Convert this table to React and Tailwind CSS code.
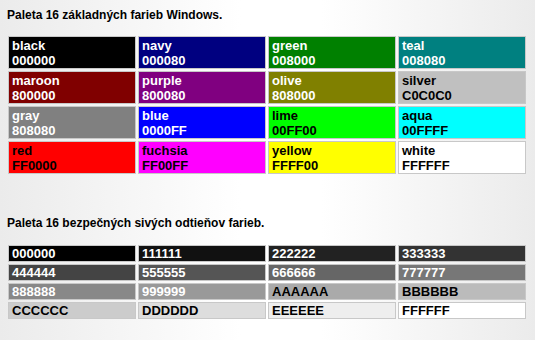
const basic = [
  ['black', '000000', 'text-white'],
  ['navy', '000080', 'text-white'],
  ['green', '008000', 'text-white'],
  ['teal', '008080', 'text-white'],
  ['maroon', '800000', 'text-white'],
  ['purple', '800080', 'text-white'],
  ['olive', '808000', 'text-white'],
  ['silver', 'C0C0C0', 'text-black'],
  ['gray', '808080', 'text-white'],
  ['blue', '0000FF', 'text-white'],
  ['lime', '00FF00', 'text-black'],
  ['aqua', '00FFFF', 'text-black'],
  ['red', 'FF0000', 'text-black'],
  ['fuchsia', 'FF00FF', 'text-black'],
  ['yellow', 'FFFF00', 'text-black'],
  ['white', 'FFFFFF', 'text-black'],
];

const grays = [
  '000000', '111111', '222222', '333333',
  '444444', '555555', '666666', '777777',
  '888888', '999999', 'AAAAAA', 'BBBBBB',
  'CCCCCC', 'DDDDDD', 'EEEEEE', 'FFFFFF',
];

export default function App() {
  return (
    <div
      className="w-[535px] h-[340px] overflow-hidden bg-[linear-gradient(to_right,#ebebeb,#ffffff_45%,#ffffff_60%,#ebebeb)] text-black"
      style={{ fontFamily: '"Liberation Sans", Arial, sans-serif' }}
    >
      <div className="pl-[7px] pt-[8px] text-[12px] font-bold leading-[14px]">
        Paleta 16 základných farieb Windows.
      </div>

      <div className="ml-[8px] mt-[14px] w-[518px] grid grid-cols-4 gap-[2px]">
        {basic.map(([name, hex, text]) => (
          <div
            key={name}
            className={`h-[33px] border border-[#c8c8c8] px-[3px] pt-[1px] text-[13px] font-bold leading-[15px] ${text}`}
            style={{ backgroundColor: `#${hex}` }}
          >
            <div>{name}</div>
            <div>{hex}</div>
          </div>
        ))}
      </div>

      <div className="pl-[7px] mt-[42px] text-[12px] font-bold leading-[14px]">
        Paleta 16 bezpečných sivých odtieňov farieb.
      </div>

      <div className="ml-[8px] mt-[15px] w-[518px] grid grid-cols-4 gap-[2px]">
        {grays.map((hex, i) => (
          <div
            key={hex}
            className={`h-[17px] border border-[#c8c8c8] px-[3px] text-[13px] font-bold leading-[15px] ${i < 10 ? 'text-white' : 'text-black'}`}
            style={{ backgroundColor: `#${hex}` }}
          >
            {hex}
          </div>
        ))}
      </div>
    </div>
  );
}
